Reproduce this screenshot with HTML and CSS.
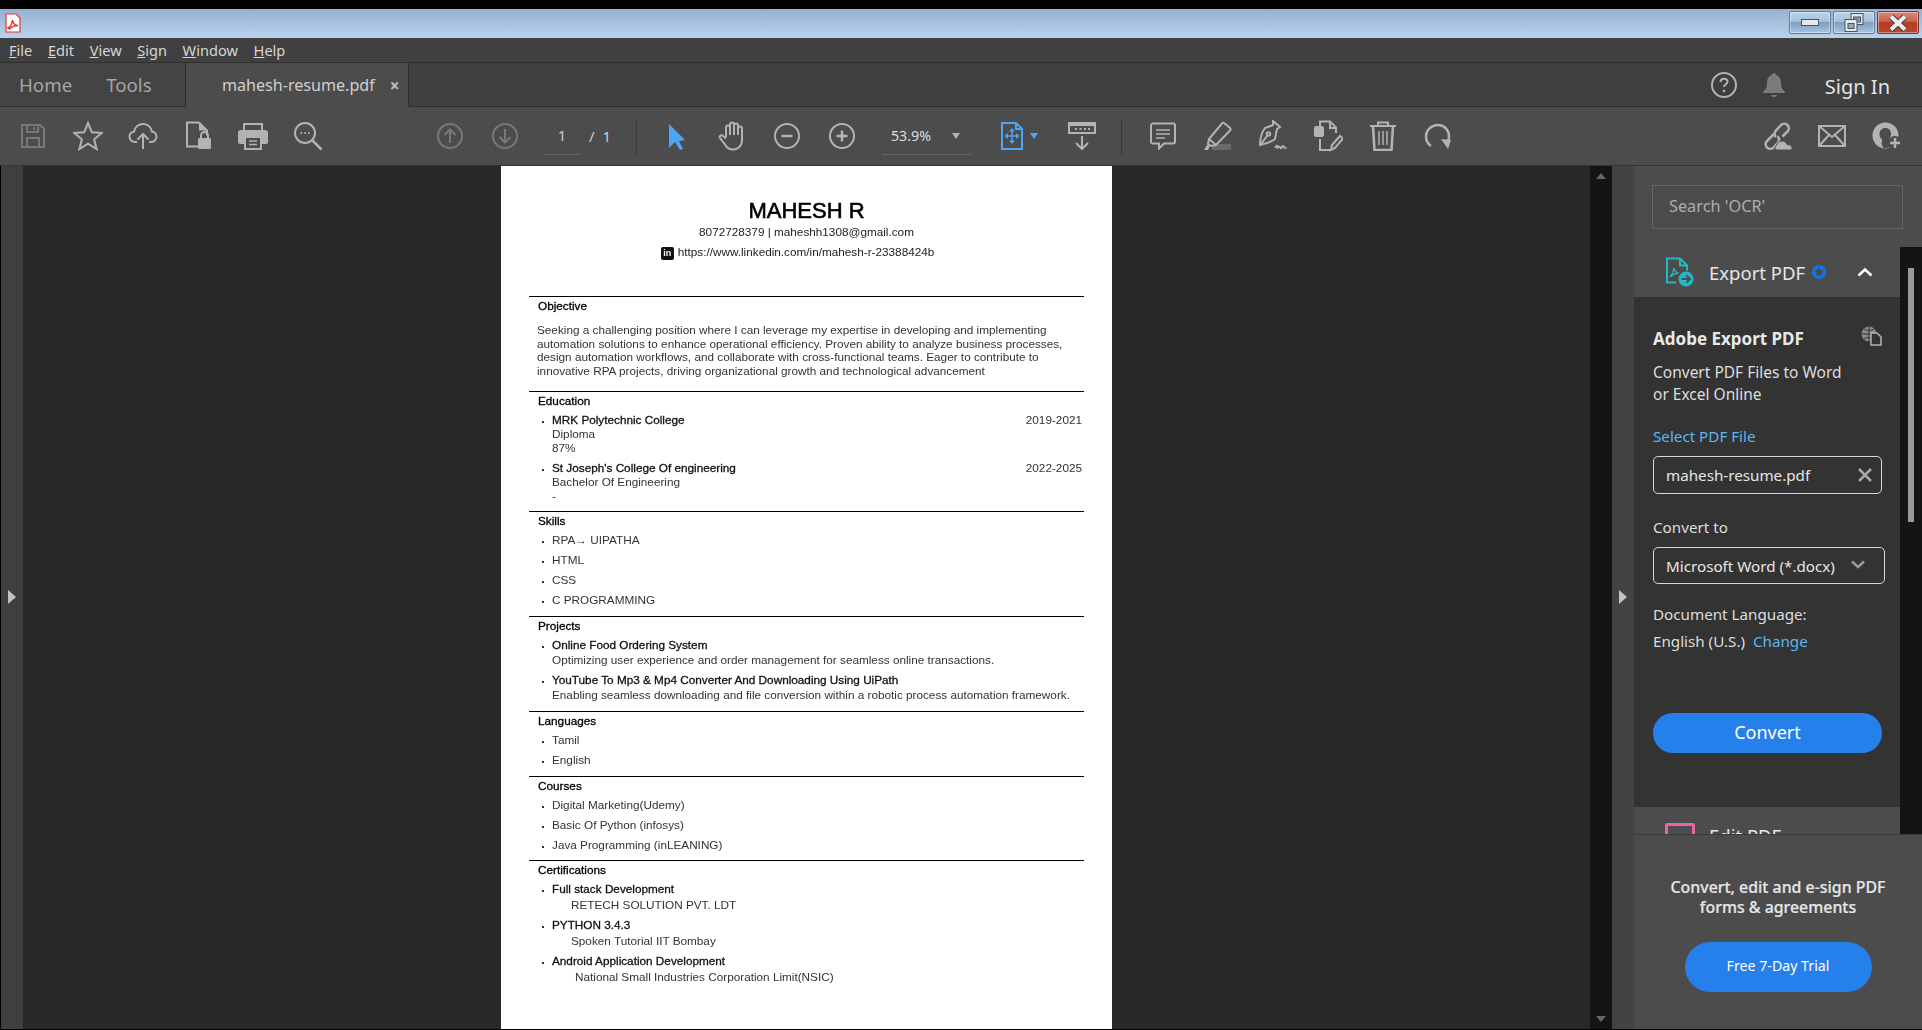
FILE: index.html
```html
<!DOCTYPE html>
<html lang="en">
<head>
    <meta charset="UTF-8">
    <title>mahesh-resume.pdf</title>
    <link rel="stylesheet" href="styles.css">
</head>
<body>
    <!-- title bar -->
    <div class="titlebar">
        <svg class="app-icon" width="16" height="20" viewBox="0 0 16 20">
            <path d="M1 1h10l4 4v14H1z" fill="#fff" stroke="#e8352b" stroke-width="1.2"/>
            <path d="M3 15c2-1 4-4 4.500-8 .5 3 2.500 5.500 5.500 5.500-3 0-6 1-8.500 3.500z" fill="none" stroke="#e8352b" stroke-width="1.500"/>
        </svg>
        <div class="win-btns">
            <div class="win-btn"><span class="glyph-min"></span></div>
            <div class="win-btn">
                <svg width="22" height="22" viewBox="0 0 22 22">
                    <rect x="8" y="1.500" width="12" height="11" fill="#dfe6ee" stroke="#4a5560"/>
                    <rect x="10.500" y="5" width="7" height="5" fill="#7f9cbb" stroke="#4a5560"/>
                    <rect x="2" y="7.500" width="12" height="12" fill="#e8e8e8" stroke="#4a5560"/>
                    <rect x="5" y="11.500" width="6" height="5" fill="#8fa8c4" stroke="#4a5560"/>
                </svg>
            </div>
            <div class="win-btn win-close">
                <svg width="22" height="18" viewBox="0 0 22 18">
                    <path d="M4 2.500l14 13M18 2.500l-14 13" stroke="#4a3a38" stroke-width="6"/>
                    <path d="M4 2.500l14 13M18 2.500l-14 13" stroke="#ececec" stroke-width="4"/>
                </svg>
            </div>
        </div>
    </div>

    <!-- menu bar -->
    <div class="menubar">
        <span><u>F</u>ile</span>
        <span><u>E</u>dit</span>
        <span><u>V</u>iew</span>
        <span><u>S</u>ign</span>
        <span><u>W</u>indow</span>
        <span><u>H</u>elp</span>
    </div>

    <!-- tabs -->
    <div class="tabbar">
        <div class="tab-nav">
            <span class="tab-home">Home</span>
            <span>Tools</span>
        </div>
        <div class="tab-doc">
            <span>mahesh-resume.pdf</span>
            <span class="tab-close">&times;</span>
        </div>
        <div class="tab-right">
            <svg class="help" width="28" height="28" viewBox="0 0 28 28">
                <circle cx="14" cy="14" r="12" fill="none" stroke="#b3b3b3" stroke-width="2"/>
                <path d="M10.500 11c0-2 1.500-3.200 3.500-3.200s3.500 1.200 3.500 3c0 2.700-3.500 2.700-3.500 5.200" fill="none" stroke="#b3b3b3" stroke-width="2"/>
                <circle cx="14" cy="20" r="1.300" fill="#b3b3b3"/>
            </svg>
            <svg class="bell" width="24" height="26" viewBox="0 0 24 26">
                <path d="M12 1c1.300 0 2 .8 2 2 3.500 1 5 4 5 8 0 4 1 6 4 9v1H1v-1c3-3 4-5 4-9 0-4 1.500-7 5-8 0-1.200.7-2 2-2z" fill="#7b7b7b"/>
                <path d="M9 23h6c-.5 1.500-1.500 2-3 2s-2.500-.5-3-2z" fill="#7b7b7b"/>
            </svg>
            <span class="sign-in">Sign In</span>
        </div>
    </div>

    <!-- toolbar -->
    <div class="toolbar">
        <div class="tool">
            <svg width="26" height="26" viewBox="0 0 26 26" fill="none" stroke="#787878" stroke-width="2"><path d="M2 2h18l4 4v18H2z"/><path d="M7 2v7h11V2M14 4v3M7 24v-9h12v9"/></svg>
        </div>
        <div class="tool">
            <svg width="30" height="30" viewBox="0 0 30 30" fill="none" stroke="#b3b3b3" stroke-width="2"><path d="M15 2l3.800 9.300 10 .6-7.700 6.400 2.500 9.700-8.600-5.400-8.600 5.400 2.500-9.700L1.200 11.900l10-.6z"/></svg>
        </div>
        <div class="tool">
            <svg width="30" height="28" viewBox="0 0 30 28" fill="none" stroke="#b3b3b3" stroke-width="2"><path d="M9 20H7c-3 0-5.500-2.300-5.500-5.300 0-2.700 2-5 4.700-5.300C7 5 10.500 2 15 2c4.500 0 8 3 8.800 7.400 2.700.3 4.700 2.600 4.700 5.300 0 3-2.500 5.300-5.500 5.300h-2"/><path d="M15 27V12M9.500 17.500L15 12l5.500 5.500"/></svg>
        </div>
        <div class="tool">
            <svg width="28" height="30" viewBox="0 0 28 30"><path d="M15 1.500H3v24h12M15 1.500l8 8v5" fill="none" stroke="#b3b3b3" stroke-width="2"/><path d="M15 1.500l8 8h-8z" fill="#b3b3b3"/><rect x="14" y="17" width="13" height="11" rx="1.500" fill="#b3b3b3"/><path d="M17 17v-2.500a3.500 3.500 0 0 1 7 0V17" fill="none" stroke="#b3b3b3" stroke-width="2"/></svg>
        </div>
        <div class="tool">
            <svg width="30" height="28" viewBox="0 0 30 28"><path d="M6 9V2h18v7" fill="none" stroke="#b3b3b3" stroke-width="2"/><path d="M3 8h24a3 3 0 0 1 3 3v9a2 2 0 0 1-2 2h-4v-8H6v8H2a2 2 0 0 1-2-2v-9a3 3 0 0 1 3-3z" fill="#b3b3b3"/><rect x="7" y="15" width="16" height="12" fill="none" stroke="#b3b3b3" stroke-width="2"/><path d="M11 19h8M11 22.500h8" stroke="#b3b3b3" stroke-width="1.500"/></svg>
        </div>
        <div class="tool">
            <svg width="30" height="30" viewBox="0 0 30 30" fill="none" stroke="#b3b3b3" stroke-width="2"><circle cx="12" cy="12" r="10"/><path d="M19.500 19.500L28.500 28.500" stroke-width="2.500"/><path d="M7.500 12h1.500M11.300 12h1.500M15 12h1.500" stroke-width="2"/></svg>
        </div>

        <div class="tool tool-nav">
            <svg width="26" height="26" viewBox="0 0 26 26" fill="none" stroke="#787878" stroke-width="2"><circle cx="13" cy="13" r="12"/><path d="M13 20V6.500M7.500 12L13 6.500l5.500 5.500"/></svg>
        </div>
        <div class="tool">
            <svg width="26" height="26" viewBox="0 0 26 26" fill="none" stroke="#787878" stroke-width="2"><circle cx="13" cy="13" r="12"/><path d="M13 6v13.500M7.500 14l5.500 5.500 5.500-5.500"/></svg>
        </div>
        <div class="page-input">1</div>
        <div class="page-total">/&nbsp;&nbsp;1</div>
        <div class="sep sep-page"></div>

        <div class="tool tool-select">
            <svg width="18" height="27" viewBox="0 0 18 27"><path d="M1 1l16 16-6 1 4 8-3 1-5-8-6 6z" fill="#4ea4f5"/></svg>
        </div>
        <div class="tool">
            <svg width="28" height="30" viewBox="0 0 28 30" fill="none" stroke="#b3b3b3" stroke-width="2"><path d="M8 16V6.500a2 2 0 0 1 4 0M12 14V3.500a2 2 0 0 1 4 0V14M16 14V4.500a2 2 0 0 1 4 0V14M20 14V7.500a2 2 0 0 1 4 0V19c0 6-4 9.500-9 9.500-4 0-6.500-2-8-5l-5-6.500c-1-1.500 1-3.500 2.500-2.500L8 17.500"/></svg>
        </div>
        <div class="tool">
            <svg width="26" height="26" viewBox="0 0 26 26" fill="none" stroke="#b3b3b3" stroke-width="2"><circle cx="13" cy="13" r="12"/><path d="M7.500 13h11" stroke-width="2.500"/></svg>
        </div>
        <div class="tool">
            <svg width="26" height="26" viewBox="0 0 26 26" fill="none" stroke="#b3b3b3" stroke-width="2"><circle cx="13" cy="13" r="12"/><path d="M7.500 13h11M13 7.500v11" stroke-width="2.500"/></svg>
        </div>
        <div class="zoom-box">
            <span>53.9%</span>
            <span class="tri"></span>
        </div>
        <div class="tool tool-fit">
            <svg width="24" height="28" viewBox="0 0 24 28" fill="none" stroke="#4ea4f5" stroke-width="2"><path d="M2 1h14l6 6v20H2zM16 1v6h6"/><path d="M12 7v14M5 14h14" stroke-width="1.500"/><path d="M12 6l-3 3.500h6zM12 22l-3-3.500h6zM4.500 14L8 11v6zM19.500 14L16 11v6z" fill="#4ea4f5" stroke="none"/></svg>
            <span class="tri tri-blue"></span>
        </div>
        <div class="tool tool-marquee">
            <svg width="28" height="28" viewBox="0 0 28 28"><rect x="1" y="1" width="26" height="10" fill="none" stroke="#b3b3b3" stroke-width="2"/><rect x="1" y="1" width="26" height="3" fill="#b3b3b3"/><path d="M7 7h2M11.500 7h2M16 7h2M20 7h2" stroke="#b3b3b3" stroke-width="2"/><path d="M14 14v13M8 21l6 6 6-6" fill="none" stroke="#b3b3b3" stroke-width="2"/></svg>
        </div>
        <div class="sep sep-mark"></div>
        <div class="tool tool-comment">
            <svg width="26" height="28" viewBox="0 0 26 28" fill="none" stroke="#b3b3b3" stroke-width="2"><path d="M3 1.500h20a2 2 0 0 1 2 2v16a2 2 0 0 1-2 2h-9l-5 5v-5H3a2 2 0 0 1-2-2v-16a2 2 0 0 1 2-2z"/><path d="M6 8h14M6 12h14M6 16h9" stroke-width="1.500"/></svg>
        </div>
        <div class="tool">
            <svg width="30" height="30" viewBox="0 0 30 30"><rect x="9" y="23" width="19" height="6" fill="#6a6a6a"/><path d="M1 29l3-5 3 1-2 4z" fill="#b3b3b3"/><path d="M21 2l6 5c.8.800.800 1.500 0 2.500L13 24l-7-6L19 2.500c.5-.7 1.300-1 2-.5zM6 18l-1 5 3 2 5-1" fill="none" stroke="#b3b3b3" stroke-width="2"/></svg>
        </div>
        <div class="tool">
            <svg width="30" height="32" viewBox="0 0 30 32" fill="none" stroke="#b3b3b3" stroke-width="2"><path d="M15 1l7 6-3 2-2 10c-4 3-9 5-15 6 0-7 2-13 5-17l8-3z"/><path d="M3 24l6-8"/><circle cx="10.500" cy="14" r="1.800"/><path d="M17 28c1.500-3 2.500-3 2.500-.5 0 2 1.500-2.500 2.500-.5s1 2 2.500-.5 1 3 4 1" stroke-width="1.800"/></svg>
        </div>
        <div class="tool">
            <svg width="30" height="32" viewBox="0 0 30 32" fill="none" stroke="#b3b3b3" stroke-width="2"><path d="M7 6V1.500h10l6 6V13M17 1.500V8h6M7 19v11h10"/><rect x="1" y="6" width="10" height="11" rx="2" fill="#b3b3b3" stroke="none"/><path d="M18 30l1-5 8-9 3 2.500-8 9.500z"/></svg>
        </div>
        <div class="tool">
            <svg width="26" height="30" viewBox="0 0 26 30" fill="none" stroke="#b3b3b3" stroke-width="2"><path d="M0 5h26M8 5V1.500h10V5"/><path d="M3 5l1.500 24h17L23 5" stroke-width="2.500"/><path d="M9 10v14M13 10v14M17 10v14" stroke-width="1.500"/></svg>
        </div>
        <div class="tool">
            <svg width="28" height="28" viewBox="0 0 28 28"><path d="M7 24C3.500 21.500 2 18 2 14.500 2 8 7.500 3 14 3s11 5 11 11.500c0 2-.5 3.500-1.500 5" fill="none" stroke="#b3b3b3" stroke-width="2.500"/><path d="M17 17l10 1-3 9z" fill="#b3b3b3"/></svg>
        </div>

        <div class="tool tool-share">
            <svg width="32" height="30" viewBox="0 0 32 30">
                <path d="M13 13l-7 7a4.500 4.500 0 0 0 6.500 6.500l5-5.500a4.500 4.500 0 0 0-1-5.500" fill="none" stroke="#b3b3b3" stroke-width="2.500"/>
                <path d="M15 16a4.500 4.500 0 0 1 0-6.500l5-5.500a4.500 4.500 0 0 1 6.500 6.500l-5 5" fill="none" stroke="#b3b3b3" stroke-width="2.500"/>
                <path d="M16 29c-2.500 0-3-3.500-.5-4.500.5-3 3-4.500 5.500-4.500 2.500 0 4.500 1.500 5 3.500 3 0 5 1.500 5 3.500 0 1.500-1 2-2 2z" fill="#b3b3b3" stroke="#4c4c4c"/>
            </svg>
        </div>
        <div class="tool">
            <svg width="28" height="22" viewBox="0 0 28 22" fill="none" stroke="#b3b3b3" stroke-width="2"><rect x="1" y="1" width="26" height="20"/><path d="M1 1l13 11L27 1M1 21l10-11M27 21L17 10"/></svg>
        </div>
        <div class="tool">
            <svg width="30" height="28" viewBox="0 0 30 28">
                <circle cx="13.500" cy="13.500" r="13" fill="#b3b3b3"/>
                <path d="M13.500 6c3.500 0 5.500 2.500 5.500 6 0 2.500-1 4-2 5.500v2l5 3c-2 2-5 3.500-8.500 3.500-1 0-1.500 0-2-.1l-1-1.900c-1-1-1-3-.5-4.500v-2c-1.500-1.500-2.500-3-2.500-5.500 0-3.500 2.500-6 6-6z" fill="#4c4c4c"/>
                <circle cx="23" cy="21" r="7" fill="#4c4c4c"/>
                <path d="M23 16v10M18 21h10" stroke="#b3b3b3" stroke-width="2.500"/>
            </svg>
        </div>
    </div>

    <div class="workspace">
        <div class="left-rail"><span class="arrow-right"></span></div>

        <!-- document -->
        <div class="viewer">
            <div class="page">
                <div class="page-head">
                    <h1>MAHESH R</h1>
                    <p>8072728379 | maheshh1308@gmail.com</p>
                    <p class="linkedin"><span class="in-badge">in</span>https://www.linkedin.com/in/mahesh-r-23388424b</p>
                </div>

                <section class="objective">
                    <h2>Objective</h2>
                    <p class="summary">Seeking a challenging position where I can leverage my expertise in developing and implementing<br>automation solutions to enhance operational efficiency. Proven ability to analyze business processes,<br>design automation workflows, and collaborate with cross-functional teams. Eager to contribute to<br>innovative RPA projects, driving organizational growth and technological advancement</p>
                </section>

                <section class="education">
                    <h2>Education</h2>
                    <ul>
                        <li><span class="date">2019-2021</span><b>MRK Polytechnic College</b><br>Diploma<br>87%</li>
                        <li><span class="date">2022-2025</span><b>St Joseph's College Of engineering</b><br>Bachelor Of Engineering<br>-</li>
                    </ul>
                </section>

                <section>
                    <h2>Skills</h2>
                    <ul>
                        <li>RPA&rarr; UIPATHA</li>
                        <li>HTML</li>
                        <li>CSS</li>
                        <li>C PROGRAMMING</li>
                    </ul>
                </section>

                <section>
                    <h2>Projects</h2>
                    <ul>
                        <li><b>Online Food Ordering System</b><br>Optimizing user experience and order management for seamless online transactions.</li>
                        <li><b>YouTube To Mp3 &amp; Mp4 Converter And Downloading Using UiPath</b><br>Enabling seamless downloading and file conversion within a robotic process automation framework.</li>
                    </ul>
                </section>

                <section>
                    <h2>Languages</h2>
                    <ul>
                        <li>Tamil</li>
                        <li>English</li>
                    </ul>
                </section>

                <section class="courses">
                    <h2>Courses</h2>
                    <ul>
                        <li>Digital Marketing(Udemy)</li>
                        <li>Basic Of Python (infosys)</li>
                        <li>Java Programming (inLEANING)</li>
                    </ul>
                </section>

                <section class="certs">
                    <h2>Certifications</h2>
                    <ul>
                        <li><b>Full stack Development</b><br><span class="cert">RETECH SOLUTION PVT. LDT</span></li>
                        <li><b>PYTHON 3.4.3</b><br><span class="cert">Spoken Tutorial IIT Bombay</span></li>
                        <li><b>Android Application Development</b><br><span class="cert cert-wide">National Small Industries Corporation Limit(NSIC)</span></li>
                    </ul>
                </section>
            </div>
        </div>

        <div class="doc-scroll">
            <span class="arrow-up"></span>
            <span class="arrow-down"></span>
        </div>
        <div class="right-rail"><span class="arrow-right"></span></div>

        <!-- tools panel -->
        <aside class="panel">
            <div class="panel-search">
                <div class="search-box">Search 'OCR'</div>
            </div>
            <div class="panel-scroll">
                <div class="panel-list">
                    <div class="tool-head">
                        <svg width="30" height="30" viewBox="0 0 30 30">
                            <path d="M15 1.500H2v24h9M15 1.500l7 7v5M15 1.500v7h7" fill="none" stroke="#22b8c4" stroke-width="2"/>
                            <path d="M5 20c2-2 3.500-5 4-9 .5 3 2 4.500 4.500 5-3 .2-6 1.500-8.500 4z" fill="none" stroke="#22b8c4" stroke-width="1.300"/>
                            <circle cx="21" cy="22" r="7.500" fill="#22b8c4"/>
                            <path d="M16.500 22h7M21.500 18.500l3.500 3.500-3.500 3.500" fill="none" stroke="#4c4c4c" stroke-width="2"/>
                        </svg>
                        <span class="tool-name">Export PDF</span>
                        <svg class="star-badge" width="14" height="14" viewBox="0 0 14 14">
                            <circle cx="7" cy="7" r="7" fill="#1473e6"/>
                            <path d="M7 1.800l1.500 3.300 3.500.4-2.600 2.300.8 3.500L7 9.900l-3.200 1.400.8-3.500L2 5.500l3.500-.4z" fill="#4c4c4c"/>
                        </svg>
                        <svg class="chev-up" width="16" height="10" viewBox="0 0 16 10"><path d="M1.500 8.500L8 2.500l6.500 6" fill="none" stroke="#fff" stroke-width="2.500"/></svg>
                    </div>
                    <div class="tool-body">
                        <div class="body-title">
                            <h3>Adobe Export PDF</h3>
                            <svg width="21" height="20" viewBox="0 0 21 20">
                                <circle cx="8" cy="8" r="7.500" fill="#8a8a8a"/>
                                <path d="M.5 8h15M8 .5v15M3 3c3 2 7 2 10 0M3 13c3-2 7-2 10 0" stroke="#333" fill="none"/>
                                <path d="M10 7h6l4 4v8h-10z" fill="#333" stroke="#b3b3b3" stroke-width="1.500"/>
                            </svg>
                        </div>
                        <p class="body-text">Convert PDF Files to Word<br>or Excel Online</p>
                        <div class="link-label">Select PDF File</div>
                        <div class="field field-file">
                            <span>mahesh-resume.pdf</span>
                            <svg width="14" height="14" viewBox="0 0 14 14"><path d="M1 1l12 12M13 1L1 13" stroke="#a8a8a8" stroke-width="2.500"/></svg>
                        </div>
                        <div class="field-label">Convert to</div>
                        <div class="field field-select">
                            <span>Microsoft Word (*.docx)</span>
                            <svg class="select-chev" width="14" height="9" viewBox="0 0 14 9"><path d="M1 1.500l6 5.500 6-5.500" fill="none" stroke="#999" stroke-width="2.500"/></svg>
                        </div>
                        <div class="lang-label">Document Language:</div>
                        <div class="lang-value">English (U.S.) <a>Change</a></div>
                        <div class="btn btn-convert">Convert</div>
                    </div>
                    <div class="tool-head tool-head-next">
                        <span class="edit-icon"></span>
                        <span class="tool-name">Edit PDF</span>
                    </div>
                </div>
                <div class="panel-scrollbar"><span class="panel-thumb"></span></div>
            </div>
            <div class="promo">
                <p>Convert, edit and e-sign PDF<br>forms &amp; agreements</p>
                <div class="btn btn-trial">Free 7-Day Trial</div>
            </div>
        </aside>
    </div>
</body>
</html>
```

FILE: styles.css
```css
/* window */
html, body {
    margin: 0;
    padding: 0;
    height: 100%;
    overflow: hidden;
}
body {
    background: #000;
    padding-top: 9px;
    box-sizing: border-box;
    display: flex;
    flex-direction: column;
    font-family: "Noto Sans", "Open Sans", sans-serif;
    color: #ddd;
}
.titlebar {
    height: 29px;
    flex: none;
    display: flex;
    justify-content: space-between;
    padding-left: 5px;
    background: linear-gradient(#96b1d0, #b7d2ec);
}
.app-icon {
    margin-top: 4px;
}
.win-btns {
    display: flex;
    gap: 2px;
    padding: 2px 3px 0 0;
}
.win-btn {
    width: 42px;
    height: 23px;
    box-sizing: border-box;
    border: 1px solid #5f7d9c;
    border-radius: 2px;
    display: flex;
    align-items: center;
    justify-content: center;
    background: linear-gradient(#bdd4ea 0, #a5c0dc 45%, #7f9dbe 50%, #a8c4e0 100%);
    box-shadow: inset 0 0 0 1px rgba(255, 255, 255, 0.4);
}
.win-close {
    background: linear-gradient(#d9897b 0, #c9614e 45%, #b83c22 50%, #b5482e 100%);
    border-color: #6d3a34;
}
.glyph-min {
    width: 16px;
    height: 5px;
    background: #e8e8e8;
    border: 1px solid #4a5560;
}

/* menu */
.menubar {
    height: 24px;
    flex: none;
    display: flex;
    align-items: center;
    gap: 15.600px;
    padding-left: 9px;
    background: #404040;
    border-bottom: 1px solid #2e2e2e;
    font-size: 14.600px;
    color: #d6d6d6;
}

/* tabs */
.tabbar {
    height: 43px;
    flex: none;
    display: flex;
    background: #3f3f3f;
    border-bottom: 1px solid #2e2e2e;
}
.tab-nav {
    width: 185px;
    box-sizing: border-box;
    padding-left: 19px;
    display: flex;
    align-items: center;
    gap: 34px;
    background: #444;
    font-size: 18.700px;
    color: #a6a6a6;
}
.tab-doc {
    width: 224px;
    box-sizing: border-box;
    height: 44px;
    display: flex;
    align-items: center;
    padding-left: 36px;
    background: #4c4c4c;
    border-left: 1px solid #2e2e2e;
    border-right: 1px solid #2e2e2e;
    font-size: 16.100px;
    color: #cfcfcf;
}
.tab-close {
    margin-left: 15px;
    font-size: 17px;
    font-weight: bold;
    color: #bdbdbd;
}
.tab-right {
    flex: 1;
    display: flex;
    align-items: center;
    justify-content: flex-end;
    padding-right: 32px;
}
.bell {
    margin-left: 24px;
}
.sign-in {
    margin-left: 39px;
    font-size: 20px;
    color: #e4e4e4;
    position: relative;
    top: 2px;
}

/* toolbar */
.toolbar {
    height: 58px;
    flex: none;
    display: flex;
    align-items: center;
    padding-left: 5px;
    background: #4c4c4c;
    border-bottom: 1px solid #333;
}
.tool {
    width: 55px;
    display: flex;
    align-items: center;
    justify-content: center;
    flex: none;
}
.tool-nav {
    margin-left: 87px;
}
.page-input {
    width: 36px;
    margin-left: 12px;
    height: 37px;
    line-height: 34px;
    box-sizing: border-box;
    text-align: center;
    border-bottom: 1px solid #666;
    font-size: 15px;
    color: #ccc;
}
.page-total {
    margin-left: 9px;
    width: 47px;
    font-size: 15px;
    color: #ccc;
}
.sep {
    width: 1px;
    height: 37px;
    background: #3a3a3a;
    flex: none;
}
.tool-select {
    margin-left: 12px;
}
.zoom-box {
    width: 89px;
    height: 37px;
    margin-left: 13px;
    box-sizing: border-box;
    border-bottom: 1px solid #666;
    display: flex;
    align-items: center;
    padding-left: 9px;
    font-size: 14.200px;
    color: #ddd;
}
.tri {
    width: 0;
    height: 0;
    margin-left: 21px;
    border-left: 4.500px solid transparent;
    border-right: 4.500px solid transparent;
    border-top: 6px solid #b3b3b3;
}
.tool-fit {
    margin-left: 13px;
    position: relative;
}
.tri-blue {
    position: absolute;
    left: 46px;
    top: 50%;
    margin: -3px 0 0;
    border-top-color: #4ea4f5;
}
.tool-marquee {
    margin-left: 15px;
}
.sep-mark {
    margin-left: 12px;
}
.tool-comment {
    margin-left: 13px;
}
.tool-share {
    margin-left: 284px;
}

/* main area */
.workspace {
    flex: 1;
    display: flex;
    min-height: 0;
    border-left: 1px solid #000;
    border-bottom: 1px solid #000;
}
.left-rail {
    width: 22px;
    flex: none;
    background: #3f3f3f;
    display: flex;
    align-items: center;
    justify-content: center;
}
.right-rail {
    width: 22px;
    flex: none;
    background: #434343;
    display: flex;
    align-items: center;
    justify-content: center;
}
.arrow-right {
    width: 0;
    height: 0;
    margin-top: -1px;
    border-top: 7px solid transparent;
    border-bottom: 7px solid transparent;
    border-left: 8px solid #c2c2c2;
}
.doc-scroll {
    width: 22px;
    flex: none;
    background: #141414;
    display: flex;
    flex-direction: column;
    justify-content: space-between;
    align-items: center;
    padding: 7px 0;
    box-sizing: border-box;
}
.arrow-up {
    width: 0;
    height: 0;
    border-left: 5px solid transparent;
    border-right: 5px solid transparent;
    border-bottom: 6px solid #666;
}
.arrow-down {
    width: 0;
    height: 0;
    border-left: 5px solid transparent;
    border-right: 5px solid transparent;
    border-top: 6px solid #666;
}
.viewer {
    flex: 1;
    background: #282828;
    overflow: hidden;
    padding-left: 478px;
}

/* pdf page, slightly soft like a scaled down pdf */
.page {
    width: 611px;
    height: 870px;
    box-sizing: border-box;
    background: #fff;
    padding: 0 28px;
    font-family: "Liberation Sans", Arial, sans-serif;
    font-size: 11.750px;
    color: #333;
    filter: blur(0.3px);
}
.page-head {
    height: 130px;
    box-sizing: border-box;
    padding-top: 31px;
    text-align: center;
}
.page-head h1 {
    margin: 0 0 -3px;
    font-size: 22px;
    line-height: 28px;
    font-weight: normal;
    color: #000;
    -webkit-text-stroke: 0.6px #000;
}
.page-head p {
    margin: 0;
    line-height: 20px;
    color: #222;
}
.linkedin {
    display: flex;
    justify-content: center;
    align-items: center;
    gap: 4px;
    padding-right: 18px;
}
.in-badge {
    width: 13px;
    height: 13px;
    margin-top: 3px;
    border-radius: 2px;
    background: #111;
    color: #fff;
    font-size: 9px;
    font-weight: bold;
    line-height: 13px;
    text-align: center;
}
section {
    border-top: 1px solid #000;
    padding-bottom: 6px;
}
h2 {
    margin: 0 0 1px 9px;
    font-size: 11.750px;
    line-height: 17px;
    font-weight: normal;
    color: #000;
    -webkit-text-stroke: 0.3px #000;
}
.objective {
    padding-bottom: 13px;
}
.summary {
    margin: 9px 0 0 8px;
    line-height: 13.700px;
}
ul {
    list-style: none;
    margin: 0;
    padding: 0 0 0 23px;
}
li {
    position: relative;
    padding: 2.500px 0;
    line-height: 15px;
}
li::before {
    content: "";
    position: absolute;
    left: -10px;
    top: 11px;
    width: 2px;
    height: 2px;
    background: #333;
}
li b {
    font-weight: normal;
    color: #111;
    -webkit-text-stroke: 0.3px #111;
}
.education {
    padding-bottom: 5px;
}
.courses {
    padding-bottom: 5px;
}
.education li {
    line-height: 14px;
    padding: 3px 0;
}
.certs li {
    line-height: 15.500px;
}
.date {
    float: right;
    margin-right: 2px;
}
.cert {
    padding-left: 19px;
}
.cert-wide {
    padding-left: 23px;
}

/* tools panel */
.panel {
    width: 288px;
    flex: none;
    display: flex;
    flex-direction: column;
    background: #4c4c4c;
}
.panel-search {
    height: 81px;
    flex: none;
    box-sizing: border-box;
    padding: 19px 19px 0 18px;
}
.search-box {
    height: 44px;
    box-sizing: border-box;
    border: 1px solid #666;
    padding-left: 16px;
    line-height: 41px;
    font-size: 16.300px;
    color: #adadad;
}
.panel-scroll {
    flex: 1;
    min-height: 0;
    display: flex;
}
.panel-list {
    width: 266px;
    flex: none;
    overflow: hidden;
}
.panel-scrollbar {
    flex: 1;
    background: #141414;
    padding: 21px 0 0 8px;
}
.panel-thumb {
    display: block;
    width: 6px;
    height: 254px;
    background: #9a9a9a;
}
.tool-head {
    height: 50px;
    display: flex;
    align-items: center;
    padding-left: 31px;
}
.tool-name {
    margin-left: 14px;
    font-size: 18.500px;
    color: #e6e6e6;
}
.star-badge {
    margin-left: 7px;
}
.chev-up {
    margin-left: 31px;
}
.tool-body {
    height: 510px;
    box-sizing: border-box;
    background: #333;
    padding: 29px 18px 0 19px;
}
.body-title {
    display: flex;
    justify-content: space-between;
    align-items: flex-start;
}
.body-title h3 {
    margin: 0;
    font-size: 17px;
    line-height: 26px;
    font-weight: 700;
    color: #e8e8e8;
}
.body-text {
    margin: 9px 0 0;
    font-size: 15.500px;
    line-height: 22px;
    color: #ddd;
}
.link-label {
    margin-top: 20px;
    font-size: 15.200px;
    line-height: 22px;
    color: #5bb7f0;
}
.field {
    height: 38px;
    box-sizing: border-box;
    margin-top: 9px;
    padding: 0 9px 0 12px;
    border: 1px solid #d8d8d8;
    border-radius: 5px;
    display: flex;
    justify-content: space-between;
    align-items: center;
    font-size: 15.200px;
    color: #e6e6e6;
}
.field-select {
    width: 232px;
    height: 37px;
    margin-top: 9px;
    padding-right: 19px;
}
.select-chev {
    margin-top: -3px;
}
.field-label {
    margin-top: 22px;
    font-size: 15.200px;
    line-height: 22px;
    color: #ddd;
}
.lang-label {
    margin-top: 19px;
    font-size: 15.200px;
    line-height: 22px;
    color: #ddd;
}
.lang-value {
    margin-top: 5px;
    font-size: 15.200px;
    line-height: 22px;
    color: #ddd;
}
.lang-value a {
    margin-left: 4px;
    color: #5bb7f0;
}
.btn {
    background: #2680eb;
    color: #fff;
    text-align: center;
}
.btn-convert {
    height: 40px;
    margin-top: 61px;
    border-radius: 20px;
    font-size: 18px;
    line-height: 38px;
}
.tool-head-next {
    height: 27px;
    align-items: flex-start;
    padding-top: 16px;
}
.edit-icon {
    width: 24px;
    height: 24px;
    border: 3px solid #e666a8;
    border-radius: 2px;
    flex: none;
}
.promo {
    height: 195px;
    flex: none;
    box-sizing: border-box;
    border-top: 1px solid #3a3a3a;
    padding-top: 42px;
    text-align: center;
    background: #4c4c4c;
}
.promo p {
    margin: 0;
    font-size: 15.900px;
    line-height: 20px;
    font-weight: 500;
    color: #e6e6e6;
    -webkit-text-stroke: 0.2px #e6e6e6;
}
.btn-trial {
    width: 187px;
    height: 50px;
    margin: 25px auto 0;
    border-radius: 25px;
    font-size: 14.200px;
    line-height: 48px;
}
```
